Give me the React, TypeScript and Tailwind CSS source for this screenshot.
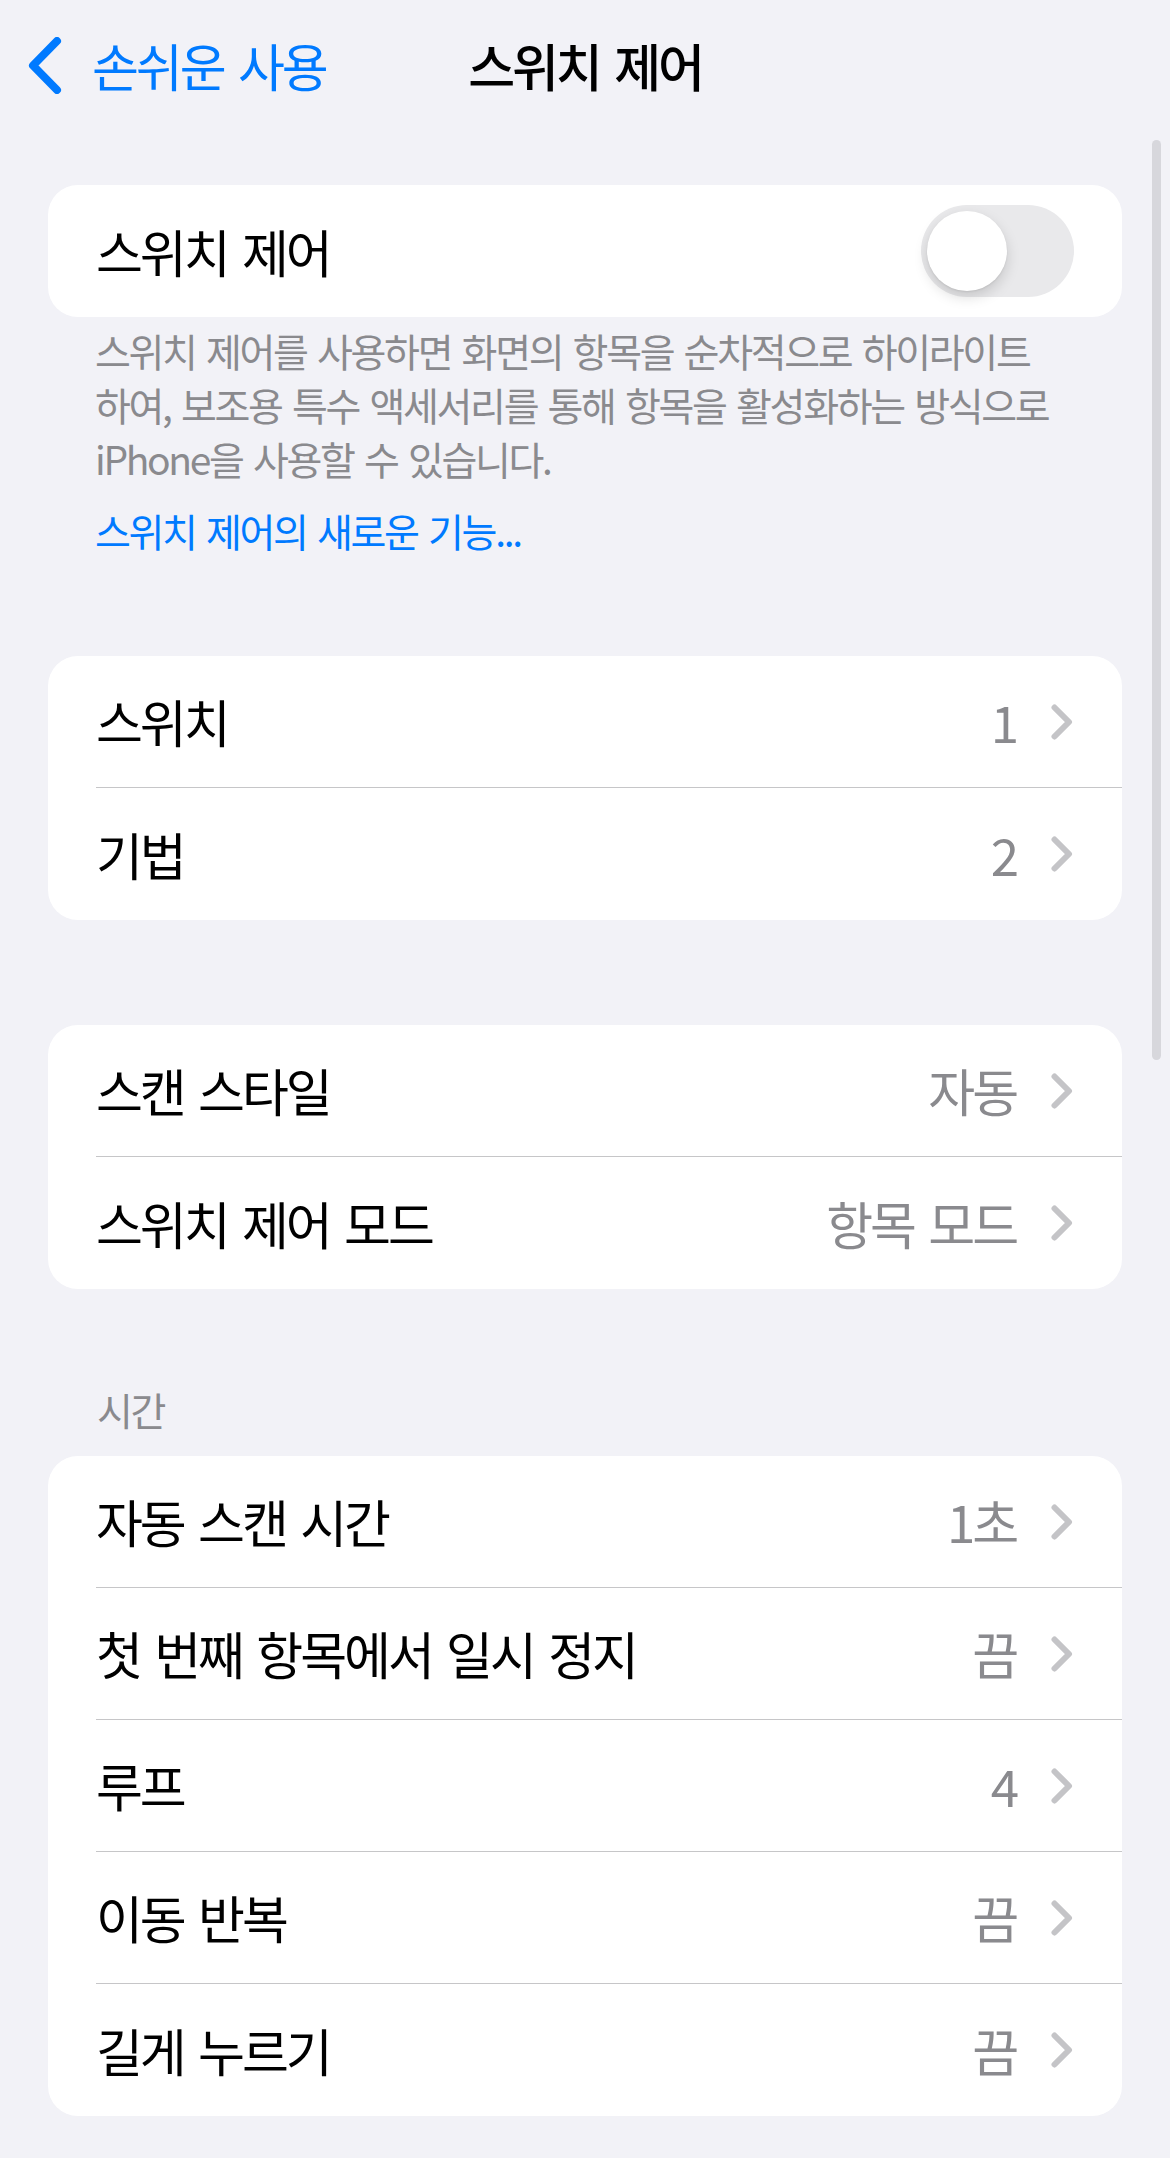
import type { ReactNode } from "react";

const FONT = "font-['Noto_Sans_CJK_KR','Noto_Sans',sans-serif]";

type Item = { label: string; value: string };

const inputItems: Item[] = [
  { label: "스위치", value: "1" },
  { label: "기법", value: "2" },
];

const scanItems: Item[] = [
  { label: "스캔 스타일", value: "자동" },
  { label: "스위치 제어 모드", value: "항목 모드" },
];

const timingItems: Item[] = [
  { label: "자동 스캔 시간", value: "1초" },
  { label: "첫 번째 항목에서 일시 정지", value: "끔" },
  { label: "루프", value: "4" },
  { label: "이동 반복", value: "끔" },
  { label: "길게 누르기", value: "끔" },
];

function BackChevron() {
  return (
    <svg width="34" height="57" viewBox="0 0 34 57" fill="none">
      <path
        d="M29 4 L5 28.5 L29 53"
        stroke="#007aff"
        strokeWidth="8"
        strokeLinecap="round"
        strokeLinejoin="round"
      />
    </svg>
  );
}

function Chevron() {
  return (
    <svg width="22" height="36" viewBox="0 0 22 36" fill="none">
      <path
        d="M3.5 3.5 L18 18 L3.5 32.5"
        stroke="#c4c4c7"
        strokeWidth="6"
        strokeLinecap="round"
        strokeLinejoin="round"
      />
    </svg>
  );
}

function Card({ children }: { children: ReactNode }) {
  return <div className="mx-[48px] overflow-hidden rounded-[30px] bg-white">{children}</div>;
}

function Row({ item, last }: { item: Item; last: boolean }) {
  return (
    <div className="pl-[48px]">
      <div
        className={`flex h-[132px] items-center justify-between pr-[49px] ${
          last ? "" : "border-b border-[#c6c6c8]"
        }`}
      >
        <span className="text-[51px] tracking-[-0.06em] [word-spacing:6px] text-black">{item.label}</span>
        <div className="flex items-center gap-[35px]">
          <span className="text-[51px] tracking-[-0.06em] [word-spacing:6px] text-[#8a8a8e]">{item.value}</span>
          <Chevron />
        </div>
      </div>
    </div>
  );
}

function Group({ items }: { items: Item[] }) {
  return (
    <Card>
      {items.map((item, i) => (
        <Row key={item.label} item={item} last={i === items.length - 1} />
      ))}
    </Card>
  );
}

export default function App() {
  return (
    <div className={`relative min-h-[2158px] w-full bg-[#f2f2f7] ${FONT}`}>
      {/* scroll indicator */}
      <div className="absolute left-[1152px] top-[140px] h-[920px] w-[9px] rounded-full bg-[#d7d7dc]" />

      <header className="grid h-[130px] grid-cols-[1fr_auto_1fr] items-center">
        <div className="flex items-center gap-[30px] pl-[28px]">
          <BackChevron />
          <span className="text-[51px] tracking-[-0.06em] [word-spacing:6px] text-[#007aff]">손쉬운 사용</span>
        </div>
        <h1 className="text-[51px] font-medium tracking-[-0.06em] [word-spacing:6px] text-black">스위치 제어</h1>
        <div />
      </header>

      <div className="mt-[55px]">
        <Card>
          <div className="flex h-[132px] items-center justify-between pl-[48px] pr-[48px]">
            <span className="text-[51px] tracking-[-0.06em] [word-spacing:6px] text-black">스위치 제어</span>
            <div className="relative h-[92px] w-[153px] rounded-full bg-[#e9e9eb]">
              <div className="absolute left-[6px] top-[6px] h-[80px] w-[80px] rounded-full bg-white shadow-[0_6px_14px_rgba(0,0,0,0.15),0_1px_2px_rgba(0,0,0,0.08)]" />
            </div>
          </div>
        </Card>
      </div>

      <div className="px-[95px] pt-[6px] text-[39px] leading-[54px] tracking-[-0.06em] [word-spacing:4px] text-[#8a8a8e]">
        <p className="whitespace-nowrap">스위치 제어를 사용하면 화면의 항목을 순차적으로 하이라이트</p>
        <p className="whitespace-nowrap">하여, 보조용 특수 액세서리를 통해 항목을 활성화하는 방식으로</p>
        <p className="whitespace-nowrap">iPhone을 사용할 수 있습니다.</p>
        <p className="mt-[18px] whitespace-nowrap text-[#007aff]">스위치 제어의 새로운 기능...</p>
      </div>

      <div className="mt-[99px]">
        <Group items={inputItems} />
      </div>

      <div className="mt-[105px]">
        <Group items={scanItems} />
      </div>

      <div className="mt-[93px] px-[97px] text-[39px] leading-[54px] tracking-[-0.06em] text-[#8a8a8e]">
        시간
      </div>
      <div className="mt-[20px]">
        <Group items={timingItems} />
      </div>
    </div>
  );
}
